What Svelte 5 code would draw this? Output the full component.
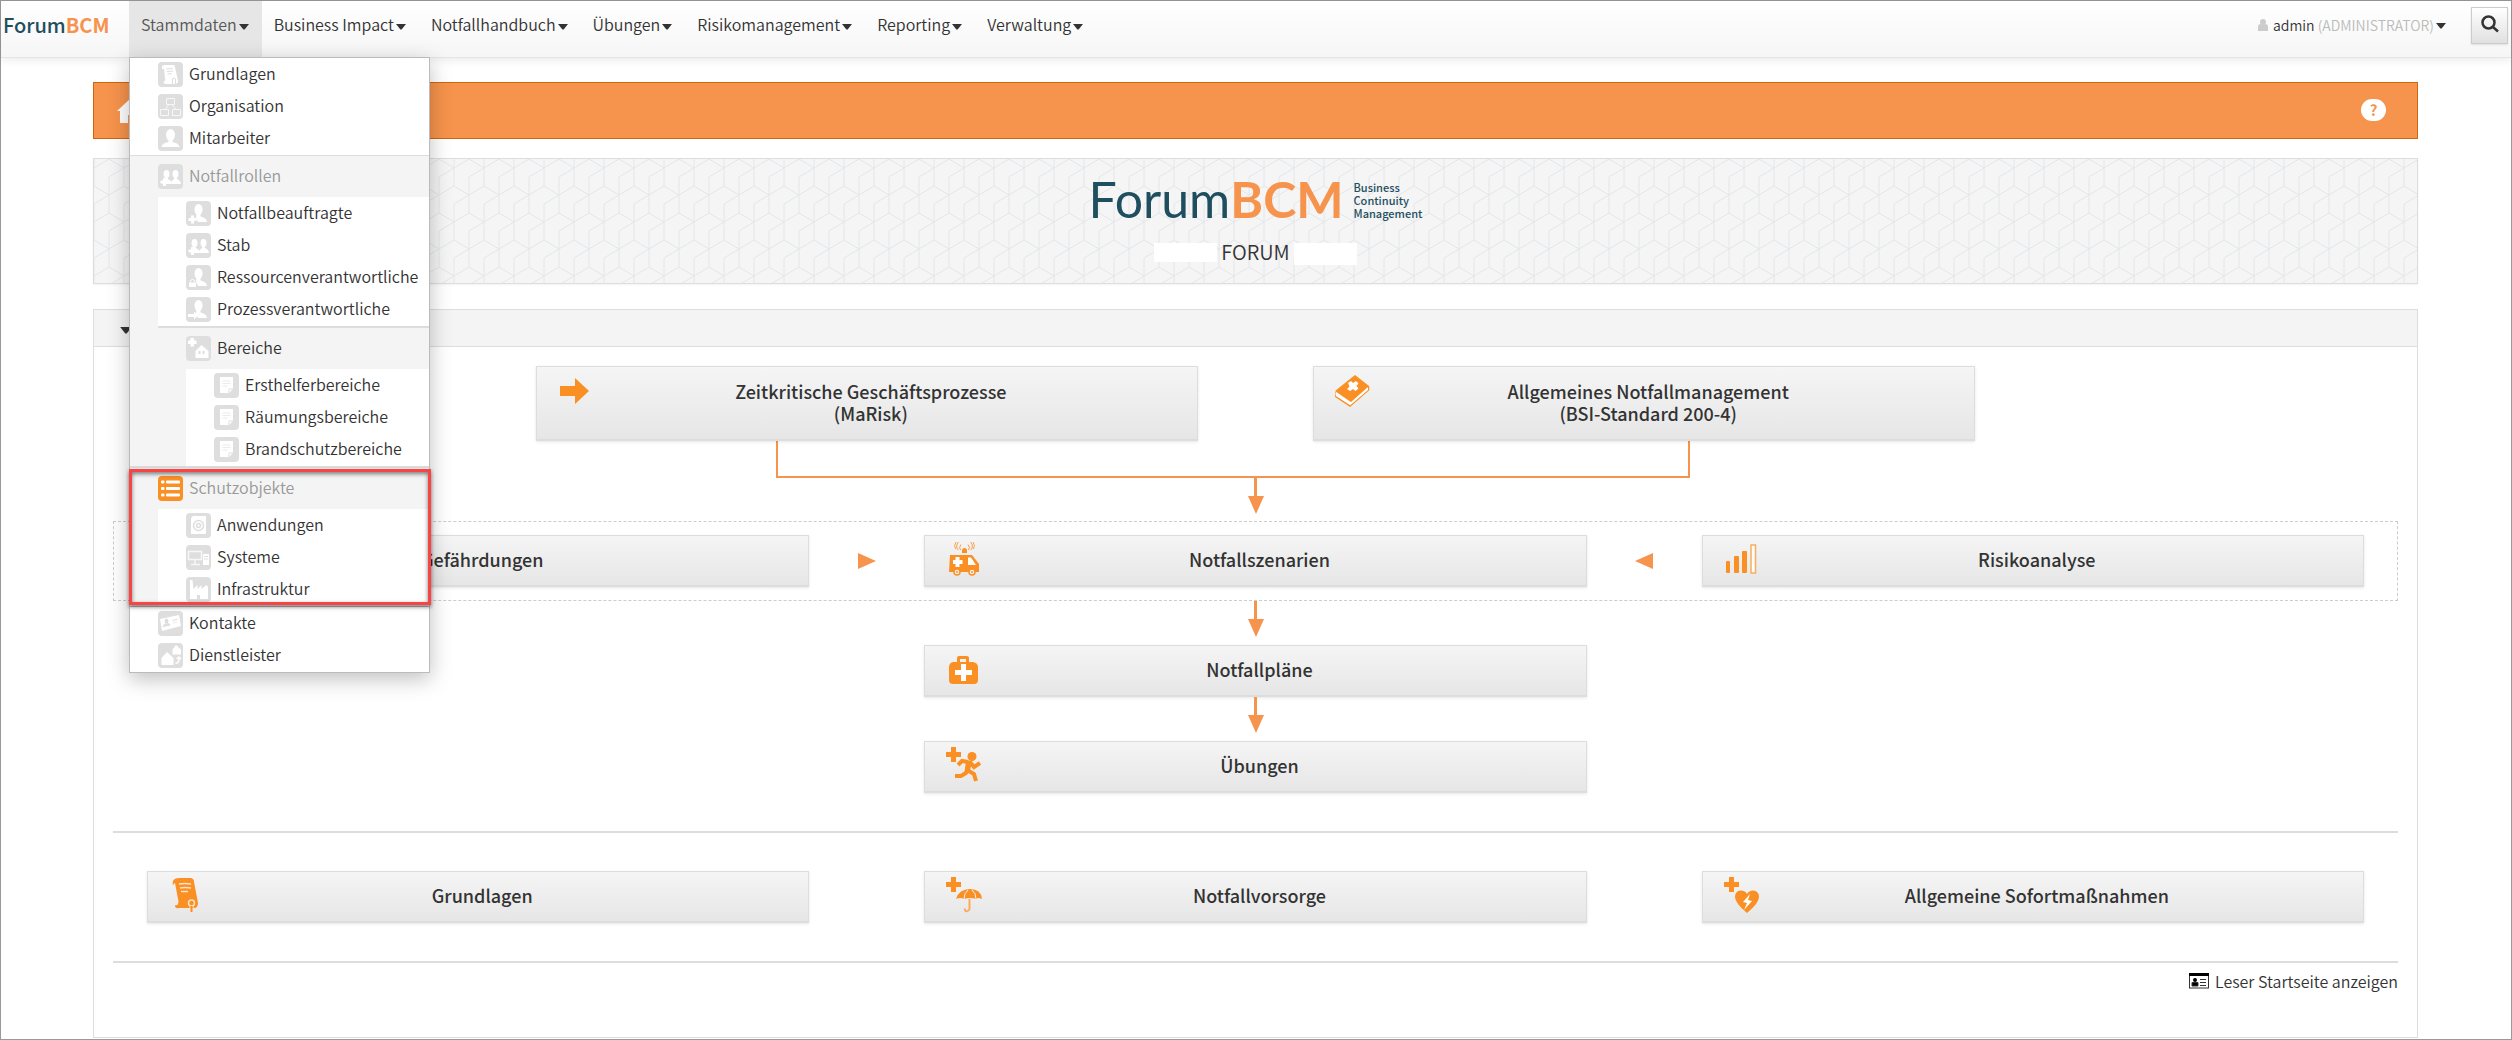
<script lang="ts">
	type Entry = { label: string; icon: string; muted?: boolean; active?: boolean; children?: Entry[] };

	const navItems = [
		'Business Impact',
		'Notfallhandbuch',
		'Übungen',
		'Risikomanagement',
		'Reporting',
		'Verwaltung'
	];

	const menu: Entry[] = [
		{ label: 'Grundlagen', icon: 'scroll' },
		{ label: 'Organisation', icon: 'org' },
		{ label: 'Mitarbeiter', icon: 'person' },
		{
			label: 'Notfallrollen',
			icon: 'team',
			muted: true,
			children: [
				{ label: 'Notfallbeauftragte', icon: 'personPlus' },
				{ label: 'Stab', icon: 'team' },
				{ label: 'Ressourcenverantwortliche', icon: 'personLock' },
				{ label: 'Prozessverantwortliche', icon: 'personArrow' },
				{
					label: 'Bereiche',
					icon: 'area',
					children: [
						{ label: 'Ersthelferbereiche', icon: 'note' },
						{ label: 'Räumungsbereiche', icon: 'note' },
						{ label: 'Brandschutzbereiche', icon: 'note' }
					]
				}
			]
		},
		{
			label: 'Schutzobjekte',
			icon: 'list',
			muted: true,
			active: true,
			children: [
				{ label: 'Anwendungen', icon: 'disc' },
				{ label: 'Systeme', icon: 'system' },
				{ label: 'Infrastruktur', icon: 'factory' }
			]
		},
		{ label: 'Kontakte', icon: 'card' },
		{ label: 'Dienstleister', icon: 'service' }
	];

	let open = $state(true);
</script>

{#snippet caret()}
	<svg class="caret" viewBox="0 0 10 6" aria-hidden="true"><path d="M0 0h10L5.600 5.500h-1.200z" /></svg>
{/snippet}

{#snippet menuIcon(name: string)}
	<svg class="menu-icon" viewBox="0 0 25 25" aria-hidden="true">
		<rect width="25" height="25" rx="4" fill={name === 'list' ? '#fa8f24' : '#dedede'} />
		<g fill="#fff">
			{#if name === 'scroll'}
				<path d="M4 5q0-2 3-2h8q2 0 2 2l3 14q0 3-3 3H8q-3 0-2-3 2 0 1-3L6 7H4z" />
				<path d="M8.500 7l6-.500M9 9.500l6-.500M9.500 12l4-.300" stroke="#dedede" fill="none" />
				<path d="M14.500 22v-4q0-2 1.500-2t1.500 2v4" stroke="#dedede" fill="none" />
			{:else if name === 'org'}
				<path
					d="M8.500 4.500h8v6h-8zM2.500 15.500h8v6h-8zM14.500 15.500h8v6h-8zM11 10.500l-4 5M14 10.500l4 5"
					fill="none"
					stroke="#f7f7f7"
				/>
			{:else if name === 'person'}
				<ellipse cx="12.500" cy="9" rx="4.500" ry="6" />
				<path d="M10.500 13h4v3c3 1 6.500 1.500 7 5h-18c.500-3.500 4-4 7-5z" />
			{:else if name === 'team'}
				<ellipse cx="8.500" cy="10" rx="3" ry="4" />
				<path d="M7.300 13h2.500v2l3.200 2v3H7z" />
				<ellipse cx="17.500" cy="10" rx="3" ry="4" />
				<path d="M16.200 13h2.600v2c2 1 3.700 1.500 4.200 5H13c0-3 1.500-4 3.200-5z" />
				<path d="M5 14h3v2.500h2.500v3H8V22H5v-2.500H2.500v-3H5z" />
			{:else if name === 'personPlus' || name === 'personLock' || name === 'personArrow'}
				<ellipse cx="12.500" cy="8.500" rx="4" ry="5.500" />
				<path d="M10.500 12h4v3.500c3 1 6 1.500 6.500 5.500h-9l-2-4z" />
				{#if name === 'personPlus'}
					<path d="M5 14.500h3V17h2.500v3H8v2.500H5V20H2.500v-3H5z" />
				{:else if name === 'personLock'}
					<path d="M3 17.500h7v4.500H3z" />
					<path d="M4.500 17.500v-1a2 2 0 0 1 4 0v1" fill="none" stroke="#fff" />
				{:else}
					<path d="M2 17h6v-2.500l4 4-4 4V20H2z" />
				{/if}
			{:else if name === 'area'}
				<path d="M4.500 2h3.500v2.500H10.500v3.500H8v2.500H4.500V8H2V4.500h2.500z" />
				<path d="M15.500 9l7 6v7H9.500v-7z" />
				<path d="M12.500 15h2v3h-2zM16.500 15h2v3h-2z" fill="#dedede" />
			{:else if name === 'note'}
				<path d="M6 4h13v12l-4 4H6z" />
				<path d="M8.500 8h8M8.500 10.500h8M8.500 13h5" stroke="#ebebeb" />
				<path d="M15 20v-4h4" fill="none" stroke="#dedede" />
			{:else if name === 'list'}
				<rect x="3" y="4.500" width="3.500" height="3" rx="1" />
				<rect x="3" y="11" width="3.500" height="3" rx="1" />
				<rect x="3" y="17.500" width="3.500" height="3" rx="1" />
				<rect x="8" y="4.500" width="14" height="3" rx="1" />
				<rect x="8" y="11" width="14" height="3" rx="1" />
				<rect x="8" y="17.500" width="14" height="3" rx="1" />
			{:else if name === 'disc'}
				<path d="M7 3h13v18H5V5z" />
				<circle cx="12.500" cy="12.500" r="5" fill="none" stroke="#dedede" stroke-width="1.500" />
				<circle cx="12.500" cy="12.500" r="2" fill="none" stroke="#dedede" stroke-width="1.500" />
			{:else if name === 'system'}
				<path d="M2.500 6.500h13v8h-13zM9 15v4M5 19.500h9" fill="none" stroke="#f7f7f7" stroke-width="1.500" />
				<path d="M17 9h6v11h-6z" />
				<path d="M18 11.500h4M18 14h4" stroke="#dedede" />
			{:else if name === 'factory'}
				<path d="M4 3h2.500l1 9 4-4v4l4-4v4l5-4 1.500 2v12h-8v-4h-3v4H4z" />
			{:else if name === 'card'}
				<path d="M2 8l19-4 2 11-19 5z" />
				<ellipse cx="8.500" cy="10" rx="2" ry="2.500" fill="#dedede" />
				<path d="M5 15.500c1-3 6-4 7-1.500zM14.500 9.500l5-1.200" fill="#dedede" stroke="#dedede" />
				<path d="M15 12l4-1" stroke="#ebebeb" />
			{:else if name === 'service'}
				<path d="M9 9l6.500 6v7h-12v-7zM18 2l5 4.500v5h-8.500v-5z" />
				<path d="M17.500 20.500c3-.500 4-2 3.500-6M18.500 16l2.500-2 2 2" fill="none" stroke="#fff" stroke-width="1.500" />
			{/if}
		</g>
	</svg>
{/snippet}

{#snippet entries(items: Entry[])}
	<ul class="entries">
		{#each items as item}
			{#if item.children}
				<li class="group">
					<a href="#menu" class="group-title" class:muted={item.muted}>
						{@render menuIcon(item.icon)}
						{item.label}
					</a>
					{@render entries(item.children)}
					{#if item.active}<span class="marker"></span>{/if}
				</li>
			{:else}
				<li>
					<a href="#menu" class="entry">
						{@render menuIcon(item.icon)}
						{item.label}
					</a>
				</li>
			{/if}
		{/each}
	</ul>
{/snippet}

{#snippet tile(label: string, icon: string, second: string = '')}
	<a class="tile" href="#tile">
		<svg class="tile-icon" viewBox="0 0 36 36" aria-hidden="true">
			<g fill="#fa8f24">
				{#if icon === 'arrow'}
					<path d="M2 14h15V6l14 13-14 13v-8H2z" />
				{:else if icon === 'book'}
					<path d="M20 3l14 11-18 16L0 19z" />
					<path d="M0 20v4l15 10 18.500-16v-4" fill="none" stroke="#fa8f24" stroke-width="1.500" />
					<path d="M.500 20.500L16 30.500l17-15v2.500L15.500 33 1 24z" fill="#fff" />
					<path d="M13 11l3-2 2 2 3-2 2.500 2.500-2 2.500 2 2.500-3 2.500-2.500-2-3 2L12 17l2.500-2.500z" fill="#fff" />
				{:else if icon === 'ambulance'}
					<path d="M4 14h22l7 9v8H3z" />
					<path d="M9.500 16h4v3h3v4h-3v3h-4v-3H7v-4h2.500zM22 16.500h3l5 7.500h-8z" fill="#fff" />
					<circle cx="11" cy="31" r="3" fill="#f3f3f3" stroke="#fa8f24" stroke-width="1.500" />
					<circle cx="26" cy="31" r="3" fill="#f3f3f3" stroke="#fa8f24" stroke-width="1.500" />
					<circle cx="11" cy="31" r="1" />
					<circle cx="26" cy="31" r="1" />
					<path d="M16 12V9.500a2.500 2.500 0 0 1 5 0V12z" />
					<path
						d="M14.500 9q-2-2.500.500-5.500M12 9q-3-4 .500-8M9.500 8q-2-3.500.500-7M22.500 9q2-2.500-.500-5.500M25 9q3-4-.500-8M27.500 8q2-3.500-.500-7"
						fill="none"
						stroke="#fba04a"
					/>
				{:else if icon === 'bars'}
					<rect x="2" y="20" width="4" height="12" rx="1" />
					<rect x="10" y="15" width="5" height="17" rx="1" />
					<rect x="18" y="10" width="5" height="22" rx="1" />
					<rect x="27" y="4" width="4.500" height="28" fill="#fff" stroke="#fbab5c" stroke-width="1.500" />
				{:else if icon === 'case'}
					<path
						fill-rule="evenodd"
						d="M11 11V7q0-2 2-2h8q2 0 2 2v4h4q5 1 5 5v13q0 4-4 4H7q-4 0-4-4V16q0-4 4-5zM14 11h6V8h-6z"
					/>
					<path d="M15 13h5v6h6v5h-6v6h-5v-6H9v-5h6z" fill="#fff" />
				{:else if icon === 'scroll'}
					<path d="M4 4q1-3 7-3h10q4 0 4 4l4 21q0 5-4 5H10q-4 1-4-3 2 1 3-1 1-2 0-5L6 6Q5 6 4.500 8 3 7 4 4z" />
					<path d="M10 7q6-1 12 0M11 11q5-1 11 0M12 14.500h7" fill="none" stroke="#fde3c8" stroke-width="1.500" />
					<circle cx="22.500" cy="26" r="3" fill="#fa8f24" stroke="#fde3c8" stroke-width="1.500" />
					<path d="M21 29v5.500M24 29v5.500" stroke="#fde3c8" />
					<path d="M21.500 29h2v6h-2z" />
				{:else}
					<path d="M5 0h5v5h5v5h-5v5H5v-5H0V5h5z" />
					{#if icon === 'run'}
						<circle cx="26" cy="9.500" r="4.500" />
						<path
							d="M22 15l-6-1-4 4M23 15l-3 11-5 3H9M21 23l7 4 2 7M24 15l4 5 6-4"
							fill="none"
							stroke="#fa8f24"
							stroke-width="4"
						/>
						<path d="M20 13l6 1-2 10-5-1z" />
					{:else if icon === 'umbrella'}
						<path d="M10 22q3-10 14-10 11 0 12 10-4-2-6 0-6-2-12 0-4-2-8 0z" />
						<path d="M18 22q0-6 4-9M30 22q0-6-4-9" fill="none" stroke="#f3f3f3" />
						<path d="M23.500 22v10q-1 3-4 2l-1-2.500" fill="none" stroke="#fbab5c" stroke-width="2" />
					{:else}
						<path d="M23 36q-12-10-12-16 0-6 5.500-6.500Q21.500 13.500 23 17q2-3.500 6-3.500 6 .500 6 6.500 0 6-12 16z" />
						<path d="M26 17l-7 8 4 1-3 7 8-9-4-1z" fill="#fff" />
					{/if}
				{/if}
			</g>
		</svg>
		<span>{label}{#if second}<br />{second}{/if}</span>
	</a>
{/snippet}

<div class="page">
	<header class="navbar">
		<a class="brand" href="#home">Forum<b>BCM</b></a>
		<nav>
			<div class="dropdown">
				<button class="nav-item" class:open onclick={() => (open = !open)}>Stammdaten{@render caret()}</button>
				{#if open}
					<div class="menu">{@render entries(menu)}</div>
				{/if}
			</div>
			{#each navItems as item}
				<button class="nav-item">{item}{@render caret()}</button>
			{/each}
		</nav>
		<button class="user">
			<svg class="user-icon" viewBox="0 0 10 12" aria-hidden="true">
				<circle cx="5" cy="3" r="3" />
				<path d="M0 12V8q0-3 3-3 2 1.500 4 0 3 0 3 3v4z" />
			</svg>
			<span>admin <span class="role">(ADMINISTRATOR)</span></span>
			{@render caret()}
		</button>
		<button class="search" aria-label="Suche">
			<svg viewBox="0 0 18 18" aria-hidden="true">
				<circle cx="7.500" cy="7.500" r="6" /><path d="M12 12l5 4.500" />
			</svg>
		</button>
	</header>

	<main>
		<div class="crumbs">
			<a href="#home" aria-label="Startseite">
				<svg class="home" viewBox="0 0 28 26" aria-hidden="true">
					<path d="M14 0L0 13h3v12h8v-8h6v8h8V13h3z" fill="#fff" />
				</svg>
			</a>
			<button class="help" aria-label="Hilfe">?</button>
		</div>

		<section class="banner">
			<svg class="pattern" width="100%" height="100%" aria-hidden="true">
				<defs>
					<pattern id="cubes" width="30" height="54" patternUnits="userSpaceOnUse">
						<path
							d="M0 0V27M0 45V54M30 0V27M30 45V54M0 45L15 36M0 9L15 0L30 9M15 18V54M15 18L30 9M0 27L15 36L30 27"
							fill="none"
							stroke="#e3e6e8"
						/>
					</pattern>
				</defs>
				<rect width="100%" height="100%" fill="url(#cubes)" />
			</svg>
			<div class="logo">
				<span class="logo-name">Forum<b>BCM</b></span>
				<span class="logo-claim">Business<br />Continuity<br />Management</span>
			</div>
			<div class="client">
				<span class="blank"></span>
				FORUM
				<span class="blank tall"></span>
			</div>
		</section>

		<section class="panel">
			<div class="panel-head">
				<button aria-label="Einklappen">{@render caret()}</button>
			</div>
			<div class="panel-body">
				<div class="row pair">
					{@render tile('Zeitkritische Geschäftsprozesse', 'arrow', '(MaRisk)')}
					{@render tile('Allgemeines Notfallmanagement', 'book', '(BSI-Standard 200-4)')}
				</div>
				<div class="bracket"></div>
				<div class="down long"></div>
				<div class="row dashed">
					{@render tile('Gefährdungen', 'bars')}
					<svg class="side" viewBox="0 0 18 16" aria-hidden="true"><path d="M0 0l18 8-18 8z" /></svg>
					{@render tile('Notfallszenarien', 'ambulance')}
					<svg class="side" viewBox="0 0 18 16" aria-hidden="true"><path d="M18 0L0 8l18 8z" /></svg>
					{@render tile('Risikoanalyse', 'bars')}
				</div>
				<div class="down"></div>
				<div class="row">{@render tile('Notfallpläne', 'case')}</div>
				<div class="down"></div>
				<div class="row">{@render tile('Übungen', 'run')}</div>
				<hr />
				<div class="row">
					{@render tile('Grundlagen', 'scroll')}
					{@render tile('Notfallvorsorge', 'umbrella')}
					{@render tile('Allgemeine Sofortmaßnahmen', 'heart')}
				</div>
				<hr />
				<a class="reader" href="#leser">
					<svg viewBox="0 0 20 16" aria-hidden="true">
						<rect x="0.500" y="1" width="19" height="14" fill="none" stroke="#333" />
						<path d="M0 0h20v3H0z" />
						<circle cx="6" cy="7" r="2" />
						<path d="M3 13V9.500h6V13zM11 6.500h6M11 9.500h6M11 12.500h6" stroke="#333" />
					</svg>
					Leser Startseite anzeigen
				</a>
			</div>
		</section>
	</main>
</div>

<style>
	:global(body) {
		margin: 0;
		background: #fff;
	}

	.page {
		box-sizing: border-box;
		min-height: 100vh;
		border: 1px solid #999;
		color: #333;
		font-family: 'Noto Sans CJK SC', 'Noto Sans', sans-serif;
		font-size: 16px;
		font-weight: 350;
		line-height: 20px;
	}

	button {
		margin: 0;
		padding: 0;
		border: 0;
		background: none;
		color: inherit;
		font: inherit;
		cursor: pointer;
	}

	a {
		color: inherit;
		text-decoration: none;
	}

	.caret {
		width: 10px;
		height: 6px;
		margin-left: 2px;
		vertical-align: 1px;
		fill: #333;
	}

	.navbar {
		display: flex;
		align-items: flex-start;
		height: 56px;
		border-bottom: 1px solid #e5e5e5;
		background: linear-gradient(#fff, #f6f6f6);
		box-shadow: 0 1px 10px rgba(0, 0, 0, 0.1);
	}

	.brand {
		box-sizing: border-box;
		width: 128px;
		padding: 14px 0 0 2px;
		color: #1f4f5f;
		font-size: 20px;
		font-weight: 500;
	}

	.brand b,
	.logo-name b {
		color: #f6934c;
	}

	nav {
		display: flex;
		flex: 1;
	}

	.nav-item {
		padding: 13px 13px 23px 12px;
		white-space: nowrap;
	}

	.nav-item.open {
		background: #e6e6e6;
		color: #555;
	}

	.dropdown {
		position: relative;
	}

	.menu {
		position: absolute;
		z-index: 10;
		top: 56px;
		left: 0;
		box-sizing: border-box;
		width: 301px;
		border: 1px solid #bbb;
		background: #f4f4f4;
		box-shadow: 0 6px 20px rgba(0, 0, 0, 0.25);
	}

	.entries {
		margin: 0;
		padding: 0;
		list-style: none;
		background: #fff;
	}

	.entry,
	.group-title {
		display: flex;
		align-items: center;
		gap: 6px;
		box-sizing: border-box;
		height: 32px;
		padding: 0 0 4px 28px;
		white-space: nowrap;
	}

	li:first-child > .entry,
	.group + li > .entry {
		height: 33px;
	}

	.group {
		position: relative;
		background: #f4f4f4;
		border-top: 1px solid #ddd;
	}

	.group .group,
	.group + .group {
		border-top-width: 2px;
	}

	.group + li:not(.group) {
		border-top: 1px solid #bbb;
	}

	.group > .group-title {
		height: 41px;
	}

	.group > :global(.entries) {
		margin-left: 28px;
	}

	.muted {
		color: #999;
	}

	.marker {
		position: absolute;
		inset: 1px -2px 1px -1px;
		border: 3px solid #f94444;
		box-shadow:
			0 2px 4px rgba(0, 0, 0, 0.5),
			inset 0 2px 4px rgba(0, 0, 0, 0.5);
	}

	.menu-icon {
		width: 25px;
		height: 25px;
		margin-top: 3px;
	}

	.user {
		display: flex;
		align-items: center;
		gap: 5px;
		padding: 14px 25px 0 0;
		font-size: 14px;
	}

	.user .caret {
		margin: 2px 0 0 -3px;
	}

	.user-icon {
		width: 10px;
		height: 12px;
		fill: #ccc;
	}

	.role {
		color: #bbb;
	}

	.search {
		width: 37px;
		height: 37px;
		margin: 6px 3px 0 0;
		border: 1px solid #ccc;
		background: linear-gradient(#fff, #e0e0e0);
		box-shadow: 0 1px 2px rgba(0, 0, 0, 0.1);
	}

	.search svg {
		width: 18px;
		height: 18px;
		fill: none;
		stroke: #333;
		stroke-width: 2.5;
	}

	main {
		padding: 24px 93px 0 92px;
	}

	.crumbs {
		display: flex;
		align-items: center;
		justify-content: space-between;
		height: 55px;
		padding: 0 31px 0 23px;
		border: 1px solid #d0650a;
		background: #f6934c;
	}

	.home {
		display: block;
		width: 28px;
		height: 26px;
	}

	.help {
		width: 25px;
		height: 22px;
		margin-bottom: 2px;
		border-radius: 11px;
		background: #fff;
		color: #f6934c;
		font-size: 15px;
		font-weight: bold;
		line-height: 20px;
	}

	.banner {
		position: relative;
		display: flex;
		flex-direction: column;
		align-items: center;
		height: 124px;
		margin-top: 19px;
		border: 1px solid #ddd;
		background: #f5f5f5;
		box-shadow: 0 1px 2px rgba(0, 0, 0, 0.05);
	}

	.pattern {
		position: absolute;
		inset: 0;
	}

	.logo,
	.client {
		position: relative;
		display: flex;
	}

	.logo {
		gap: 10px;
		margin-top: 10px;
		color: #1f4f5f;
	}

	.logo-name {
		font-family: Lato, sans-serif;
		font-size: 50px;
		font-weight: 400;
		line-height: 60px;
	}

	.logo-name b {
		font-weight: 700;
	}

	.logo-claim {
		padding-top: 12px;
		font-size: 11px;
		font-weight: 500;
		line-height: 13px;
	}

	.client {
		gap: 4px;
		margin-top: 11px;
		font-size: 20px;
		line-height: 24px;
	}

	.blank {
		width: 63px;
		height: 19px;
		margin-top: 3px;
		background: #fff;
	}

	.tall {
		height: 22px;
	}

	.panel {
		margin-top: 25px;
		border: 1px solid #ddd;
	}

	.panel-head {
		display: flex;
		align-items: center;
		height: 36px;
		padding-left: 24px;
		border-bottom: 1px solid #ddd;
		background: #f4f4f4;
	}

	.panel-head .caret {
		width: 12px;
		height: 7px;
	}

	.panel-body {
		padding: 19px 19px 46px;
	}

	.row {
		display: flex;
		align-items: center;
		justify-content: center;
		gap: 115px;
		padding: 0 34px;
	}

	.dashed {
		justify-content: space-between;
		gap: 0;
		padding: 13px 33px;
		border: 1px dashed #ccc;
	}

	.tile {
		display: flex;
		align-items: center;
		box-sizing: border-box;
		width: calc((100% - 230px) / 3);
		min-height: 52px;
		padding: 5px 22px 8px 21px;
		border: 1px solid #ddd;
		border-bottom-width: 2px;
		background: linear-gradient(#f5f5f5, #e6e6e6);
		box-shadow: 0 1px 3px rgba(0, 0, 0, 0.1);
		font-size: 18px;
		font-weight: 500;
		line-height: 22px;
		text-align: center;
	}

	.tile span {
		flex: 1;
		margin-right: 27px;
	}

	.tile-icon {
		width: 36px;
		height: 36px;
	}

	.pair .tile {
		min-height: 75px;
	}

	.pair .tile-icon {
		align-self: flex-start;
	}

	.bracket {
		box-sizing: border-box;
		width: 40%;
		height: 37px;
		margin-left: 29%;
		border: solid #f6934c;
		border-width: 0 2px 2px;
	}

	.down {
		position: relative;
		width: 3px;
		height: 44px;
		margin: 0 auto;
		background: linear-gradient(#f6934c 20px, transparent 20px);
	}

	.down::after {
		content: '';
		position: absolute;
		top: 18px;
		left: -6px;
		border: solid transparent;
		border-width: 18px 8px 0;
		border-top-color: #f6934c;
	}

	.down.long {
		height: 43px;
	}

	.side {
		width: 18px;
		height: 16px;
		fill: #f6934c;
	}

	hr {
		height: 2px;
		margin: 38px 0;
		border: 0;
		background: #ddd;
	}

	hr + .reader {
		display: flex;
		align-items: center;
		justify-content: flex-end;
		gap: 6px;
		margin-top: -30px;
	}

	.reader svg {
		width: 20px;
		height: 16px;
	}
</style>
